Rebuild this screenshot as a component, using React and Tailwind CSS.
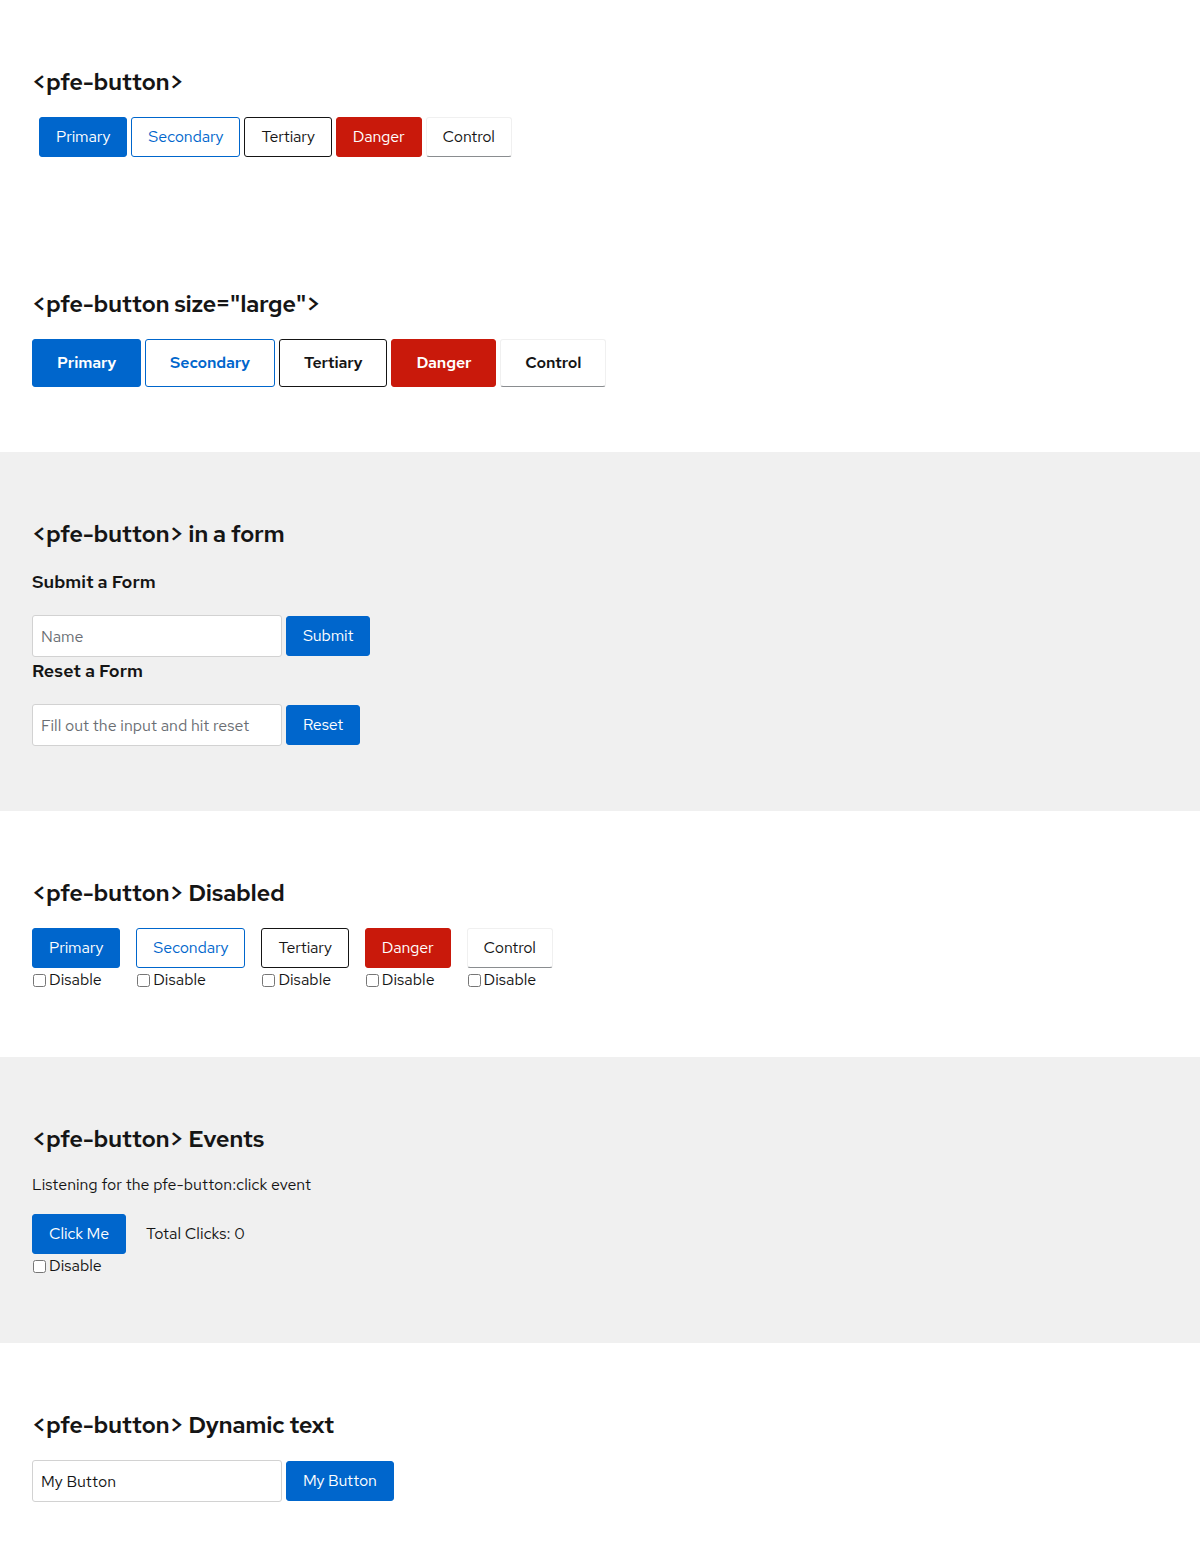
const font = { fontFamily: '"Red Hat Text", Inter, "Noto Sans", sans-serif' }

const BASE = 'inline-flex items-center justify-center rounded-[3px] border tracking-[-0.15px]'
const VARIANTS = {
  primary: 'bg-[#0066cc] border-[#0066cc] text-white',
  secondary: 'bg-white border-[#0066cc] text-[#0066cc]',
  tertiary: 'bg-white border-[#151515] text-[#151515]',
  danger: 'bg-[#c9190b] border-[#c9190b] text-white',
  control: 'bg-white border-[#f0f0f0] border-b-[#8a8d90] text-[#151515]',
}

function Btn({ variant = 'primary', large, children }) {
  const size = large ? 'h-12 px-6 text-base font-semibold' : 'h-10 px-4 text-base'
  return <button className={`${BASE} ${size} ${VARIANTS[variant]}`}>{children}</button>
}

function Section({ gray, title, children }) {
  return (
    <section className={`px-8 pt-16 pb-[65px] ${gray ? 'bg-[#f0f0f0]' : 'bg-white'}`}>
      <h2 className="text-2xl leading-9 font-semibold tracking-[-0.4px] text-[#151515] mb-[17px]">{title}</h2>
      {children}
    </section>
  )
}

function Check() {
  return (
    <label className="flex items-center text-base leading-6 text-[#151515]">
      <input type="checkbox" className="m-0 ml-px mr-[3px] w-[13px] h-[13px]" />
      Disable
    </label>
  )
}

function Field({ placeholder, value }) {
  return (
    <input
      className="w-[250px] h-[42px] bg-white border border-[#d2d2d2] rounded-[3px] px-2 text-base text-[#151515] placeholder-[#6a6e73] outline-none"
      placeholder={placeholder}
      defaultValue={value}
    />
  )
}

const names = [
  ['primary', 'Primary'],
  ['secondary', 'Secondary'],
  ['tertiary', 'Tertiary'],
  ['danger', 'Danger'],
  ['control', 'Control'],
]

export default function App() {
  return (
    <div style={font} className="text-[#151515]">
      <Section title="<pfe-button>">
        <div className="flex gap-1 ml-[7px]">
          {names.map(([v, n]) => <Btn key={v} variant={v}>{n}</Btn>)}
        </div>
      </Section>

      <Section title={'<pfe-button size="large">'}>
        <div className="flex gap-1">
          {names.map(([v, n]) => <Btn key={v} variant={v} large>{n}</Btn>)}
        </div>
      </Section>

      <Section gray title="<pfe-button> in a form">
        <h3 className="text-lg leading-[27px] font-semibold -mt-px mb-5">Submit a Form</h3>
        <div className="flex items-center gap-1">
          <Field placeholder="Name" />
          <Btn>Submit</Btn>
        </div>
        <h3 className="text-lg leading-[27px] font-semibold mb-5">Reset a Form</h3>
        <div className="flex items-center gap-1">
          <Field placeholder="Fill out the input and hit reset" />
          <Btn>Reset</Btn>
        </div>
      </Section>

      <Section title="<pfe-button> Disabled">
        <div className="flex gap-4">
          {names.map(([v, n]) => (
            <div key={v} className="flex flex-col items-start">
              <Btn variant={v}>{n}</Btn>
              <Check />
            </div>
          ))}
        </div>
      </Section>

      <Section gray title="<pfe-button> Events">
        <p className="text-base leading-6 -mt-px mb-[17px]">Listening for the pfe-button:click event</p>
        <div className="flex items-center">
          <Btn>Click Me</Btn>
          <span className="ml-5 text-base">Total Clicks: 0</span>
        </div>
        <Check />
      </Section>

      <Section title="<pfe-button> Dynamic text">
        <div className="flex items-center gap-1">
          <Field value="My Button" />
          <Btn>My Button</Btn>
        </div>
      </Section>
    </div>
  )
}
